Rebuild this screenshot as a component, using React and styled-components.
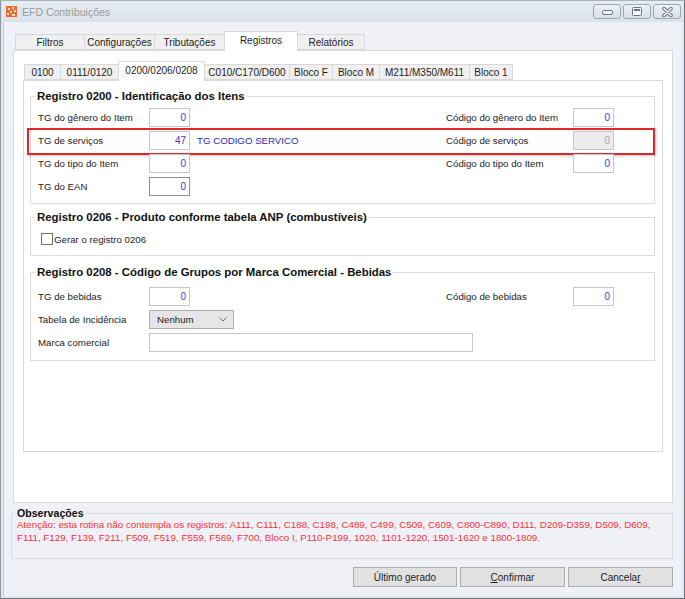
import React from "react";
import styled, { createGlobalStyle } from "styled-components";

const GlobalStyle = createGlobalStyle`
  html, body {
    margin: 0;
    padding: 0;
  }
  body {
    font-family: "Liberation Sans", Arial, sans-serif;
    font-size: 10px;
    color: #1e1e1e;
    background: #fff;
  }
  * {
    box-sizing: border-box;
  }
`;

const Window = styled.div`
  width: 685px;
  height: 599px;
  display: flex;
  flex-direction: column;
  background: #e3e9f1;
  border: 1px solid #6a7079;
  border-top-color: #a9b3bf;
  border-left-color: #8d949d;
`;

const TitleBar = styled.div`
  height: 21px;
  flex-shrink: 0;
  display: flex;
  align-items: flex-start;
  padding: 0 3px 0 5px;
  background: linear-gradient(#e6ecf3, #dae2ec);
`;

const AppIcon = styled.svg`
  width: 11px;
  height: 11px;
  margin-top: 5px;
`;

const Title = styled.span`
  margin: 5px 0 0 5px;
  font-size: 10.5px;
  color: #9a9a9a;
`;

const Controls = styled.div`
  margin: 3px 0 0 auto;
  display: flex;
  gap: 2px;
`;

const CtrlButton = styled.div`
  width: 28px;
  height: 15px;
  border: 1px solid #9ba7b5;
  border-radius: 3px;
  background: linear-gradient(#eef2f7, #d7dfe9);
  display: flex;
  align-items: center;
  justify-content: center;
`;

const Body = styled.div`
  flex: 1;
  margin: 0 2px 2px;
  padding: 9px 9px 0;
  background: #f0f0f7;
  border-left: 1px solid #c3cad3;
  display: flex;
  flex-direction: column;
`;

const TabStrip = styled.div`
  height: ${(p) => (p.$inner ? 18 : 19)}px;
  display: flex;
  align-items: flex-end;
  padding-left: ${(p) => (p.$inner ? 1 : 2)}px;
  position: relative;
  z-index: 1;
`;

const Tab = styled.div`
  width: ${(p) => p.$w}px;
  height: ${(p) => (p.$active ? 20 : 16)}px;
  margin-bottom: ${(p) => (p.$active ? -1 : 0)}px;
  margin-left: -1px;
  display: flex;
  align-items: center;
  justify-content: center;
  padding-bottom: ${(p) => (p.$active ? 2 : 0)}px;
  background: ${(p) => (p.$active ? "#fff" : "#f0f0f0")};
  border: 1px solid #d9d9d9;
  border-bottom: ${(p) => (p.$active ? "none" : "1px solid #d9d9d9")};
  color: #1e1e1e;
  white-space: nowrap;
  &:first-child {
    margin-left: 0;
  }
`;

const Panel = styled.div`
  height: 453px;
  flex-shrink: 0;
  background: #fff;
  border: 1px solid #d9d9d9;
  padding: 11px 9px 0;
`;

const InnerPanel = styled.div`
  height: 372px;
  background: #fff;
  border: 1px solid #d9d9d9;
  padding: 0 7px 0 6px;
`;

const Group = styled.fieldset`
  margin: ${(p) => p.$mt}px 0 0;
  padding: ${(p) => p.$pt}px 7px ${(p) => p.$pb}px;
  border: 1px solid #dcdcdc;
  min-width: 0;
`;

const Legend = styled.legend`
  padding: 0 2px;
  margin-left: -3px;
  font-size: 11.4px;
  font-weight: bold;
  line-height: 13px;
  color: #111;
`;

const Row = styled.div`
  height: 23px;
  display: grid;
  grid-template-columns: 111px 41px 256px 127px 41px;
  align-items: center;
  position: relative;
  ${(p) =>
    p.$highlight &&
    `
    &::after {
      content: "";
      position: absolute;
      left: -11px;
      right: -8px;
      top: -1px;
      bottom: -3px;
      border: 2px solid #e3262a;
      box-shadow: 1px 1px 2px rgba(0, 0, 0, 0.25);
      pointer-events: none;
    }
  `}
`;

const Label = styled.span`
  font-size: 9.7px;
  white-space: nowrap;
  color: #222;
`;

const NumInput = styled.input`
  width: 41px;
  height: 19px;
  margin: 0;
  padding: 0 3px 0 0;
  text-align: right;
  font: inherit;
  color: ${(p) => (p.disabled ? "#a3a3a3" : "#3e3ec6")};
  background: ${(p) => (p.disabled ? "#ececec" : "#fff")};
  border: 1px solid ${(p) => (p.$focus ? "#8e8e8e" : "#c6c6c6")};
  outline: none;
`;

const Desc = styled.span`
  padding-left: 7px;
  font-size: 9.7px;
  color: #2a2ab0;
`;

const Wide = styled.div`
  grid-column: 2 / span 3;
`;

const Select = styled.div`
  width: 85px;
  height: 19px;
  display: flex;
  align-items: center;
  justify-content: space-between;
  padding: 0 6px 0 7px;
  background: #e6e6e6;
  border: 1px solid #adadad;
  font-size: 9.7px;
  color: #222;
`;

const TextInput = styled.input`
  width: ${(p) => p.$w}px;
  height: 19px;
  margin: 0;
  font: inherit;
  background: #fff;
  border: 1px solid #c6c6c6;
  outline: none;
`;

const CheckRow = styled.label`
  height: 22px;
  display: flex;
  align-items: center;
  padding-left: 3px;
  font-size: 9.7px;
  color: #222;
`;

const CheckBox = styled.span`
  width: 12px;
  height: 12px;
  margin-right: 1px;
  background: #fff;
  border: 1px solid #707070;
`;

const Observations = styled.fieldset`
  margin: 4px 0 0 -2px;
  padding: 0 5px 14px;
  border: 1px solid #dcdcdc;
  min-width: 0;
`;

const ObsLegend = styled.legend`
  padding: 0 1px;
  margin-left: -1px;
  font-size: 10.6px;
  font-weight: bold;
  line-height: 13px;
  color: #111;
`;

const Note = styled.div`
  margin-top: -2px;
  font-size: 9.8px;
  line-height: 13px;
  color: #f5323a;
  white-space: nowrap;
`;

const ButtonBar = styled.div`
  margin-top: 8px;
  display: flex;
  justify-content: flex-end;
  gap: 3px;
`;

const Button = styled.div`
  width: ${(p) => p.$w}px;
  height: 20px;
  display: flex;
  align-items: center;
  justify-content: center;
  background: #e1e1e1;
  border: 1px solid #adadad;
  color: #1e1e1e;
`;

const outerTabs = [
  ["Filtros", 70],
  ["Configurações", 71],
  ["Tributações", 71],
  ["Registros", 74],
  ["Relatórios", 68],
];

const innerTabs = [
  ["0100", 37],
  ["0111/0120", 59],
  ["0200/0206/0208", 87],
  ["C010/C170/D600", 86],
  ["Bloco F", 44],
  ["Bloco M", 48],
  ["M211/M350/M611", 91],
  ["Bloco 1", 44],
];

function Logo() {
  return (
    <AppIcon viewBox="0 0 11 11">
      <rect width="11" height="11" fill="#f26b2c" />
      <rect x="2" y="2" width="2" height="2" fill="#fde2d2" />
      <rect x="6" y="1" width="2" height="2" fill="#fde2d2" />
      <rect x="4" y="5" width="2" height="2" fill="#fde2d2" />
      <rect x="8" y="4" width="2" height="2" fill="#fde2d2" />
      <rect x="1" y="7" width="2" height="2" fill="#fde2d2" />
      <rect x="6" y="8" width="3" height="2" fill="#fde2d2" />
    </AppIcon>
  );
}

export default function App() {
  return (
    <>
      <GlobalStyle />
      <Window>
        <TitleBar>
          <Logo />
          <Title>EFD Contribuições</Title>
          <Controls>
            <CtrlButton>
              <svg width="11" height="6" viewBox="0 0 11 6">
                <rect x="0.5" y="1.5" width="10" height="4" rx="1.5" fill="#f6f7f9" stroke="#6c7481" />
              </svg>
            </CtrlButton>
            <CtrlButton>
              <svg width="10" height="9" viewBox="0 0 10 9">
                <rect x="0.5" y="0.5" width="9" height="8" rx="1" fill="#f6f7f9" stroke="#6c7481" />
                <rect x="2" y="2" width="6" height="2" fill="#6c7481" />
              </svg>
            </CtrlButton>
            <CtrlButton>
              <svg width="11" height="10" viewBox="0 0 11 10">
                <path d="M2 1.5 L9 8.5 M9 1.5 L2 8.5" stroke="#6c7481" strokeWidth="3.6" strokeLinecap="round" />
                <path d="M2 1.5 L9 8.5 M9 1.5 L2 8.5" stroke="#f2f4f7" strokeWidth="1.6" strokeLinecap="round" />
              </svg>
            </CtrlButton>
          </Controls>
        </TitleBar>

        <Body>
          <TabStrip>
            {outerTabs.map(([t, w]) => (
              <Tab key={t} $w={w} $active={t === "Registros"}>
                {t}
              </Tab>
            ))}
          </TabStrip>
          <Panel>
            <TabStrip $inner>
              {innerTabs.map(([t, w]) => (
                <Tab key={t} $w={w} $active={t === "0200/0206/0208"}>
                  {t}
                </Tab>
              ))}
            </TabStrip>
            <InnerPanel>
              <Group $mt={9} $pt={3} $pb={5}>
                <Legend>Registro 0200 - Identificação dos Itens</Legend>
                <Row>
                  <Label>TG do gênero do Item</Label>
                  <NumInput readOnly value="0" />
                  <span />
                  <Label>Código do gênero do Item</Label>
                  <NumInput readOnly value="0" />
                </Row>
                <Row $highlight>
                  <Label>TG de serviços</Label>
                  <NumInput readOnly value="47" />
                  <Desc>TG CODIGO SERVICO</Desc>
                  <Label>Código de serviços</Label>
                  <NumInput disabled value="0" />
                </Row>
                <Row>
                  <Label>TG do tipo do Item</Label>
                  <NumInput readOnly value="0" />
                  <span />
                  <Label>Código do tipo do Item</Label>
                  <NumInput readOnly value="0" />
                </Row>
                <Row>
                  <Label>TG do EAN</Label>
                  <NumInput readOnly value="0" $focus />
                </Row>
              </Group>

              <Group $mt={7} $pt={4} $pb={5}>
                <Legend>Registro 0206 - Produto conforme tabela ANP (combustíveis)</Legend>
                <CheckRow>
                  <CheckBox />
                  Gerar o registro 0206
                </CheckRow>
              </Group>

              <Group $mt={10} $pt={6} $pb={6}>
                <Legend>Registro 0208 - Código de Grupos por Marca Comercial - Bebidas</Legend>
                <Row>
                  <Label>TG de bebidas</Label>
                  <NumInput readOnly value="0" />
                  <span />
                  <Label>Código de bebidas</Label>
                  <NumInput readOnly value="0" />
                </Row>
                <Row>
                  <Label>Tabela de Incidência</Label>
                  <Wide>
                    <Select>
                      Nenhum
                      <svg width="8" height="5" viewBox="0 0 8 5">
                        <path d="M0.5 0.5 L4 4 L7.5 0.5" fill="none" stroke="#6d6d6d" />
                      </svg>
                    </Select>
                  </Wide>
                </Row>
                <Row>
                  <Label>Marca comercial</Label>
                  <Wide>
                    <TextInput readOnly value="" $w={324} />
                  </Wide>
                </Row>
              </Group>
            </InnerPanel>
          </Panel>

          <Observations>
            <ObsLegend>Observações</ObsLegend>
            <Note>
              Atenção: esta rotina não contempla os registros: A111, C111, C188, C198, C489, C499, C509, C609, C800-C890, D111, D209-D359, D509, D609,
              <br />
              F111, F129, F139, F211, F509, F519, F559, F569, F700, Bloco I, P110-P199, 1020, 1101-1220, 1501-1620 e 1800-1809.
            </Note>
          </Observations>

          <ButtonBar>
            <Button $w={104}>
              Último&nbsp;<u>g</u>erado
            </Button>
            <Button $w={105}>
              <u>C</u>onfirmar
            </Button>
            <Button $w={105}>
              Cancela<u>r</u>
            </Button>
          </ButtonBar>
        </Body>
      </Window>
    </>
  );
}
